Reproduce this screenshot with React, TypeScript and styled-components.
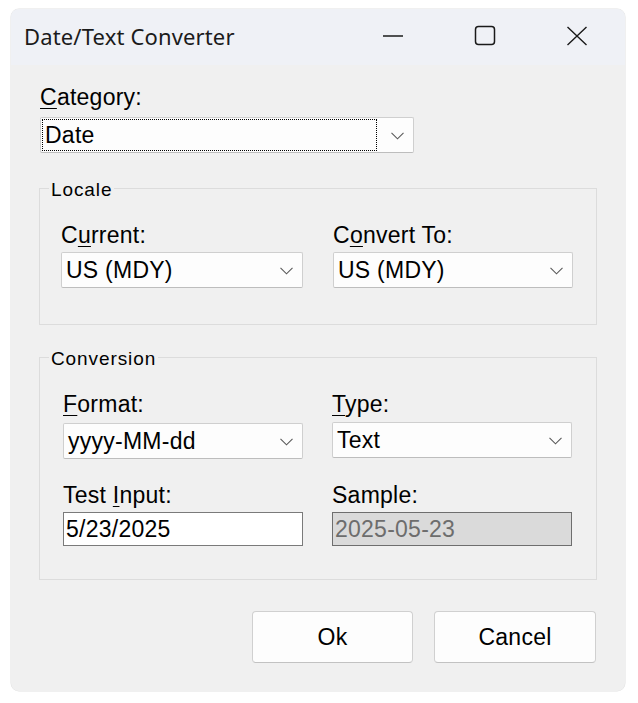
import React from "react";
import styled, { createGlobalStyle } from "styled-components";

const GlobalStyle = createGlobalStyle`
  html, body { margin: 0; padding: 0; background: #ffffff; }
  * { box-sizing: border-box; }
`;

const Page = styled.div`
  padding: 9px 13px 12px 11px;
`;

const Window = styled.div`
  width: 614px;
  border-radius: 8px;
  overflow: hidden;
  background: #f0f0f0;
  box-shadow: 0 0 0 0.5px rgba(0, 0, 0, 0.12);
  display: flex;
  flex-direction: column;
`;

const TitleBar = styled.div`
  height: 56px;
  background: #eff1f6;
  display: flex;
  align-items: center;
  padding-left: 13px;
  padding-right: 3px;
`;

const Title = styled.div`
  flex: 1;
  font-family: "Segoe UI", "Noto Sans", sans-serif;
  font-size: 22px;
  letter-spacing: 0.15px;
  color: #1b1b1b;
  padding-bottom: 2px;
`;

const CaptionButton = styled.div<{ $width: number }>`
  width: ${(p) => p.$width}px;
  height: 53px;
  align-self: flex-start;
  display: flex;
  align-items: center;
  justify-content: center;
`;

const Body = styled.div`
  display: flex;
  flex-direction: column;
  padding: 19px 28px 28px 28px;
  font-family: "Liberation Sans", Arial, sans-serif;
  letter-spacing: 0.25px;
  color: #000;
`;

const Label = styled.div<{ $gap?: number }>`
  font-size: 23px;
  line-height: 26px;
  height: 26px;
  white-space: nowrap;
  margin-bottom: ${(p) => p.$gap ?? 5}px;
  u {
    text-decoration: underline;
    text-underline-offset: 3px;
    text-decoration-thickness: 1px;
  }
`;

const Indent = styled.div`
  margin-left: 1px;
  display: flex;
  flex-direction: column;
`;

const ComboBox = styled.div<{ $width: number }>`
  width: ${(p) => p.$width}px;
  height: 36px;
  background: #fdfdfd;
  border: 1px solid #cfcfcf;
  border-bottom-color: #bdbdbd;
  border-radius: 2px;
  padding: 1px;
  display: flex;
  align-items: stretch;
`;

const ComboValue = styled.div<{ $focused?: boolean }>`
  flex: 1;
  border: 1px dotted ${(p) => (p.$focused ? "#000" : "transparent")};
  padding-left: 2px;
  display: flex;
  align-items: center;
  font-size: 23px;
  white-space: nowrap;
`;

const ChevronArea = styled.div`
  width: 35px;
  display: flex;
  align-items: center;
  justify-content: flex-end;
  padding-right: 8px;
  padding-top: 2px;
`;

const TextBox = styled.div<{ $disabled?: boolean }>`
  width: 240px;
  height: 34px;
  border: 1px solid ${(p) => (p.$disabled ? "#6e6e6e" : "#7a7a7a")};
  background: ${(p) => (p.$disabled ? "#dadada" : "#ffffff")};
  color: ${(p) => (p.$disabled ? "#6d6d6d" : "#000")};
  font-size: 23px;
  display: flex;
  align-items: center;
  padding-left: 2px;
  white-space: nowrap;
`;

const Group = styled.fieldset<{ $mt: number; $pb: number; $pl: number }>`
  margin: ${(p) => p.$mt}px 0 0 0;
  padding: 22px 23px ${(p) => p.$pb}px ${(p) => p.$pl}px;
  border: 1px solid #dcdcdc;
  min-width: 0;
`;

const Legend = styled.legend<{ $offset: number }>`
  font-size: 19px;
  line-height: 20px;
  letter-spacing: 0.9px;
  padding: 4px 2px 0 2px;
  margin-left: ${(p) => p.$offset}px;
`;

const Grid = styled.div<{ $cols: string; $colGap: number }>`
  display: grid;
  grid-template-columns: ${(p) => p.$cols};
  column-gap: ${(p) => p.$colGap}px;
`;

const Column = styled.div`
  display: flex;
  flex-direction: column;
`;

const Spacer = styled.div<{ $h: number }>`
  height: ${(p) => p.$h}px;
`;

const ButtonRow = styled.div`
  margin-top: 31px;
  display: flex;
  justify-content: flex-end;
  gap: 21px;
  padding-right: 1px;
`;

const Button = styled.button<{ $width: number }>`
  width: ${(p) => p.$width}px;
  height: 52px;
  background: #fdfdfd;
  border: 1px solid #d0d0d0;
  border-bottom-color: #c2c2c2;
  border-radius: 4px;
  font-family: "Liberation Sans", Arial, sans-serif;
  font-size: 23px;
  letter-spacing: 0.25px;
  color: #000;
  padding: 0;
`;

const Chevron = () => (
  <svg width="13" height="8" viewBox="0 0 13 8">
    <polyline points="0.5,0.8 6.5,6.8 12.5,0.8" fill="none" stroke="#5a5a5a" strokeWidth="1.1" />
  </svg>
);

const Combo: React.FC<{ value: string; width: number; focused?: boolean }> = ({ value, width, focused }) => (
  <ComboBox $width={width}>
    <ComboValue $focused={focused}>{value}</ComboValue>
    <ChevronArea>
      <Chevron />
    </ChevronArea>
  </ComboBox>
);

export default function App() {
  return (
    <>
      <GlobalStyle />
      <Page>
        <Window>
          <TitleBar>
            <Title>Date/Text Converter</Title>
            <CaptionButton $width={91}>
              <svg width="22" height="4" viewBox="0 0 22 4">
                <line x1="1" y1="2" x2="21" y2="2" stroke="#1a1a1a" strokeWidth="1.4" />
              </svg>
            </CaptionButton>
            <CaptionButton $width={93}>
              <svg width="22" height="21" viewBox="0 0 22 21">
                <rect x="1.5" y="1.5" width="19" height="18" rx="3" fill="none" stroke="#1a1a1a" strokeWidth="1.5" />
              </svg>
            </CaptionButton>
            <CaptionButton $width={91}>
              <svg width="22" height="20" viewBox="0 0 22 20">
                <path d="M1.5 1 L20.5 19 M20.5 1 L1.5 19" fill="none" stroke="#1a1a1a" strokeWidth="1.4" />
              </svg>
            </CaptionButton>
          </TitleBar>
          <Body>
            <Indent>
              <Label $gap={7}>
                <u>C</u>ategory:
              </Label>
              <Combo value="Date" width={374} focused />
            </Indent>

            <Group $mt={23} $pb={36} $pl={21}>
              <Legend $offset={-12}>Locale</Legend>
              <Grid $cols="242px 240px" $colGap={30}>
                <Column>
                  <Label $gap={4}>
                    C<u>u</u>rrent:
                  </Label>
                  <Combo value="US (MDY)" width={242} />
                </Column>
                <Column>
                  <Label $gap={4}>
                    C<u>o</u>nvert To:
                  </Label>
                  <Combo value="US (MDY)" width={240} />
                </Column>
              </Grid>
            </Group>

            <Group $mt={20} $pb={33} $pl={23}>
              <Legend $offset={-14}>Conversion</Legend>
              <Grid $cols="241px 240px" $colGap={28}>
                <Column>
                  <Label $gap={6}>
                    <u>F</u>ormat:
                  </Label>
                  <Combo value="yyyy-MM-dd" width={240} />
                  <Spacer $h={23} />
                  <Label $gap={4}>
                    Test <u>I</u>nput:
                  </Label>
                  <TextBox>5/23/2025</TextBox>
                </Column>
                <Column>
                  <Label $gap={5}>
                    <u>T</u>ype:
                  </Label>
                  <Combo value="Text" width={240} />
                  <Spacer $h={24} />
                  <Label $gap={4}>Sample:</Label>
                  <TextBox $disabled>2025-05-23</TextBox>
                </Column>
              </Grid>
            </Group>

            <ButtonRow>
              <Button $width={161}>Ok</Button>
              <Button $width={162}>Cancel</Button>
            </ButtonRow>
          </Body>
        </Window>
      </Page>
    </>
  );
}
